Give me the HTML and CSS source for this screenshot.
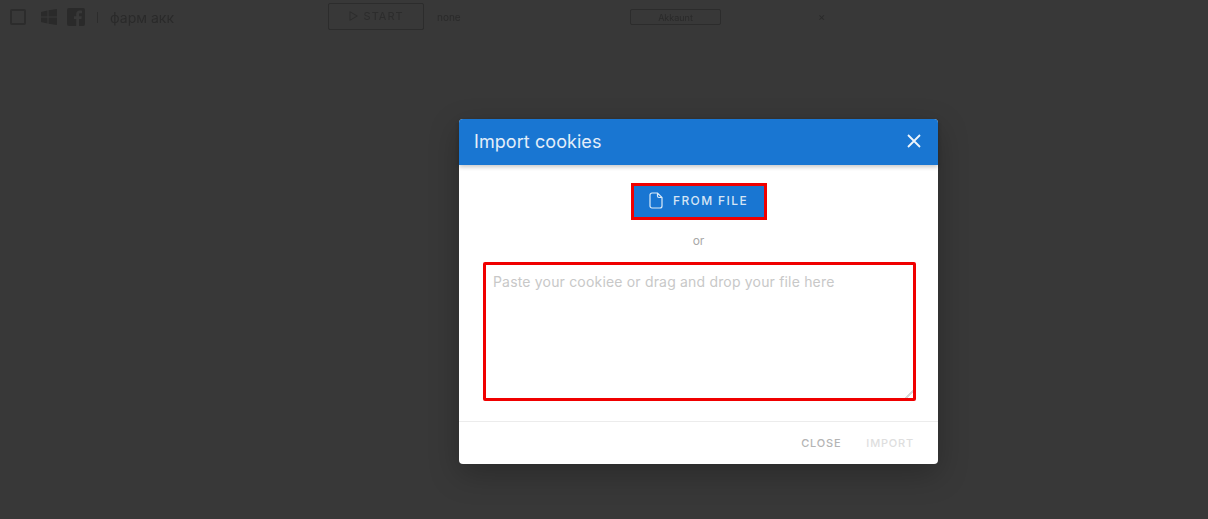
FILE: index.html
```html
<!DOCTYPE html>
<html lang="en">
<head>
<meta charset="utf-8">
<title>Import cookies</title>
<link rel="stylesheet" href="styles.css">
</head>
<body>
<div class="topbar">
  <span class="check"></span>
  <svg class="os-icon" width="18" height="18" viewBox="0 0 18 18"><path d="M1 4l6.500-1.500v6H1zM8.500 2.300L17 1v7.500H8.500zM1 9.500h6.500v6L1 14zM8.500 9.500H17V17l-8.500-1.300z"/></svg>
  <svg class="fb-icon" width="18" height="18" viewBox="0 0 18 18"><path d="M2 0h14a2 2 0 0 1 2 2v14a2 2 0 0 1-2 2h-4v-7h2.400l.4-2.800H12V6.500c0-.8.300-1.300 1.400-1.300H15V2.700c-.5-.1-1.300-.2-2.200-.2-2.200 0-3.600 1.300-3.600 3.700v2H7V11h2.200v7H2a2 2 0 0 1-2-2V2a2 2 0 0 1 2-2z"/></svg>
  <span class="sep"></span>
  <span class="name">фарм акк</span>
  <span class="start">▷ START</span>
  <span class="none">none</span>
  <span class="tag">Akkaunt</span>
  <span class="dot">×</span>
</div>
<div class="overlay">
  <section class="modal">
    <header class="modal-head">
      <h2 class="modal-title">Import cookies</h2>
      <svg class="close-icon" width="14" height="14" viewBox="0 0 14 14"><path d="M1 1l12 12M13 1L1 13"/></svg>
    </header>
    <div class="modal-body">
      <button class="file-btn" type="button">
        <svg class="file-icon" width="14" height="17" viewBox="0 0 14 17"><path d="M3 1h5.500L13 5.500V14a2 2 0 0 1-2 2H3a2 2 0 0 1-2-2V3a2 2 0 0 1 2-2zM8.500 1v3a1.500 1.500 0 0 0 1.500 1.500h3"/></svg>
        <span>FROM FILE</span>
      </button>
      <p class="or">or</p>
      <textarea class="cookie-input" placeholder="Paste your cookiee or drag and drop your file here"></textarea>
    </div>
    <footer class="modal-foot">
      <span class="foot-btn close">CLOSE</span>
      <span class="foot-btn import">IMPORT</span>
    </footer>
  </section>
</div>
</body>
</html>
```

FILE: styles.css
```css
* { box-sizing: border-box; }
html, body { height: 100%; }
body {
  margin: 0;
  height: 519px;
  overflow: hidden;
  background: #383838;
  font-family: Inter, "Liberation Sans", sans-serif;
  position: relative;
}
.topbar {
  display: flex;
  align-items: center;
  height: 34px;
  padding-left: 10px;
  color: #2a2a2a;
  font-size: 12px;
  filter: blur(.5px);
}
.check {
  width: 16px;
  height: 16px;
  border: 2px solid #2c2c2c;
  border-radius: 2px;
}
.os-icon { margin-left: 14px; fill: #2a2a2a; }
.fb-icon { margin-left: 9px; fill: #2a2a2a; }
.sep { width: 1px; height: 11px; background: #2c2c2c; margin-left: 12px; }
.name { margin-left: 12px; width: 165px; white-space: nowrap; font-size: 14px; }
.start {
  margin-left: 53px;
  width: 96px;
  height: 27px;
  margin-top: -2px;
  border: 1px solid #2c2c2c;
  border-radius: 2px;
  display: flex;
  align-items: center;
  justify-content: center;
  font-size: 11px;
  letter-spacing: 1px;
  color: #2c2c2c;
}
.none { margin-left: 13px; width: 193px; font-size: 10px; }
.tag {
  width: 91px;
  height: 16px;
  border: 1px solid #2c2c2c;
  border-radius: 2px;
  font-size: 9px;
  display: flex;
  align-items: center;
  justify-content: center;
}
.dot { margin-left: 97px; font-size: 11px; }
.overlay { position: absolute; inset: 0; }
.modal {
  position: absolute;
  left: 459px;
  top: 119px;
  width: 479px;
  height: 345px;
  background: #fff;
  border-radius: 4px;
  display: flex;
  flex-direction: column;
  box-shadow: 0 10px 30px rgba(0, 0, 0, .25);
}
.modal-head {
  height: 46px;
  flex: none;
  background: #1976d2;
  border-radius: 4px 4px 0 0;
  display: flex;
  align-items: center;
  justify-content: space-between;
  padding: 0 17px 2px 15px;
  box-shadow: 0 2px 4px rgba(0, 0, 0, .22);
}
.modal-title {
  margin: 0;
  color: #e3eef9;
  font-size: 18px;
  font-weight: 400;
  letter-spacing: .07px;
}
.close-icon { fill: none; stroke: #eef5fb; stroke-width: 1.800; }
.modal-body {
  flex: 1;
  display: flex;
  flex-direction: column;
  align-items: center;
  padding: 18px 23px 0;
}
.file-btn {
  width: 136px;
  height: 37px;
  border: 3px solid #f00000;
  border-radius: 0;
  background: #1976d2;
  color: #d5e5f5;
  display: flex;
  align-items: center;
  justify-content: center;
  gap: 10px;
  padding: 0 0 2px;
  font: 500 12px Inter, "Liberation Sans", sans-serif;
  letter-spacing: 1.400px;
}
.file-icon { fill: none; stroke: #dcebf8; stroke-width: 1.200; }
.or {
  margin: 13px 0 0;
  height: 16px;
  line-height: 16px;
  font-size: 12px;
  color: #a8a8a8;
}
.cookie-input {
  width: 433px;
  height: 139px;
  flex: none;
  align-self: flex-start;
  margin: 13px 0 0 1px;
  border: 3px solid #f00000;
  border-radius: 2px;
  padding: 8px 7px;
  outline: none;
  font: 400 14px Inter, "Liberation Sans", sans-serif;
  letter-spacing: .18px;
}
.cookie-input::placeholder { color: #c8c8c8; opacity: 1; }
.cookie-input::-webkit-resizer {
  background: linear-gradient(135deg, transparent 72%, #d8d8d8 72%, #d8d8d8 82%, transparent 82%);
}
.modal-foot {
  height: 43px;
  flex: none;
  border-top: 1px solid #ececec;
  display: flex;
  align-items: center;
  justify-content: flex-end;
  gap: 25px;
  padding: 0 24px 0 0;
}
.foot-btn { font-size: 11px; font-weight: 500; letter-spacing: .8px; }
.close { color: #b4b4b4; }
.import { color: #dedede; }
```
